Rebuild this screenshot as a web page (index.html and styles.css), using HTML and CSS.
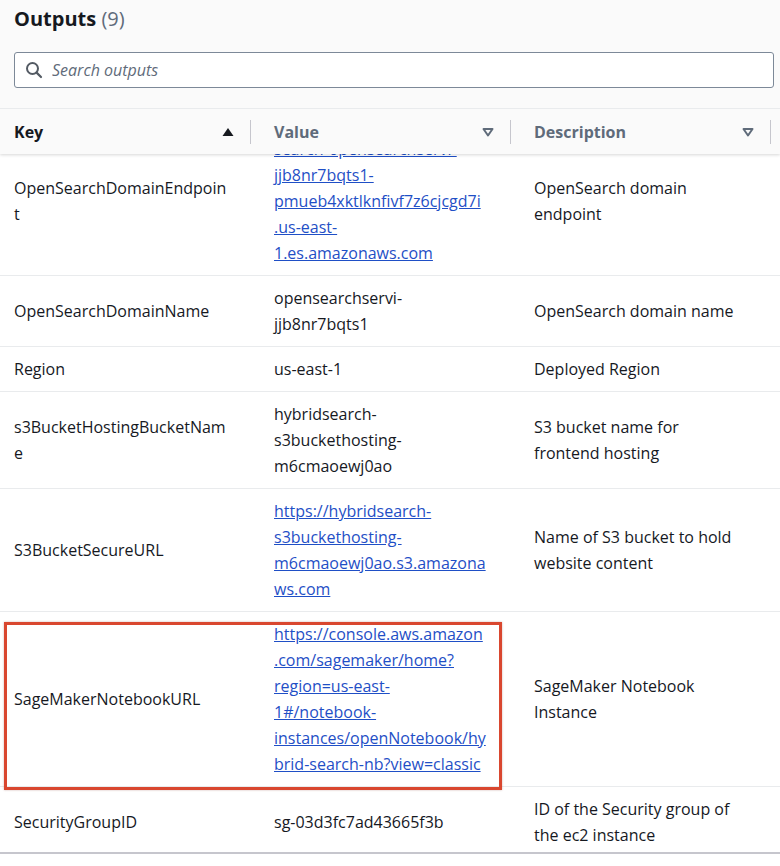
FILE: index.html
```html
<!DOCTYPE html>
<html lang="en">
<head>
<meta charset="utf-8">
<title>Outputs</title>
<link rel="stylesheet" href="styles.css">
</head>
<body>
<div class="panel">
  <div class="panel-head">
    <h2 class="title">Outputs <span class="count">(9)</span></h2>
    <label class="search">
      <svg class="search-icon" width="18" height="18" viewBox="0 0 18 18" aria-hidden="true">
        <circle cx="7.5" cy="7.5" r="5.5" fill="none" stroke="currentColor" stroke-width="2"/>
        <path d="M11.6 11.6 L16 16" stroke="currentColor" stroke-width="2.2" stroke-linecap="round"/>
      </svg>
      <input class="search-input" type="text" placeholder="Search outputs">
    </label>
  </div>

  <div class="table">
    <div class="thead">
      <div class="th sorted">
        <span class="th-label">Key</span>
        <svg class="sort" width="12" height="12" viewBox="0 0 12 12"><path d="M6 2 L11.5 10 L0.5 10 Z" fill="currentColor"/></svg>
        <span class="divider"></span>
      </div>
      <div class="th">
        <span class="th-label">Value</span>
        <svg class="sort" width="12" height="12" viewBox="0 0 12 12"><path d="M1.5 3 L10.5 3 L6 9.5 Z" fill="none" stroke="currentColor" stroke-width="2" stroke-linejoin="round"/></svg>
        <span class="divider"></span>
      </div>
      <div class="th">
        <span class="th-label">Description</span>
        <svg class="sort" width="12" height="12" viewBox="0 0 12 12"><path d="M1.5 3 L10.5 3 L6 9.5 Z" fill="none" stroke="currentColor" stroke-width="2" stroke-linejoin="round"/></svg>
        <span class="divider"></span>
      </div>
    </div>

    <div class="tbody">
      <div class="tr">
        <div class="td">OpenSearchDomainEndpoint</div>
        <div class="td val"><a href="#">search-opensearchservi-jjb8nr7bqts1-pmueb4xktlknfivf7z6cjcgd7i<br>.us-east-1.es.amazonaws.com</a></div>
        <div class="td desc">OpenSearch domain endpoint</div>
      </div>
      <div class="tr">
        <div class="td">OpenSearchDomainName</div>
        <div class="td val">opensearchservi-jjb8nr7bqts1</div>
        <div class="td desc">OpenSearch domain name</div>
      </div>
      <div class="tr">
        <div class="td">Region</div>
        <div class="td val">us-east-1</div>
        <div class="td desc">Deployed Region</div>
      </div>
      <div class="tr">
        <div class="td">s3BucketHostingBucketName</div>
        <div class="td val">hybridsearch-s3buckethosting-m6cmaoewj0ao</div>
        <div class="td desc">S3 bucket name for frontend hosting</div>
      </div>
      <div class="tr">
        <div class="td">S3BucketSecureURL</div>
        <div class="td val"><a href="#">https://hybridsearch-s3buckethosting-m6cmaoewj0ao.s3.amazonaws.com</a></div>
        <div class="td desc">Name of S3 bucket to hold website content</div>
      </div>
      <div class="tr highlighted">
        <div class="td">SageMakerNotebookURL</div>
        <div class="td val"><a href="#">https://console.aws.amazon<br>.com/sagemaker/home?region=us-east-1#/notebook-instances/openNotebook/hybrid-search-nb?view=classic</a></div>
        <div class="td desc">SageMaker Notebook Instance</div>
        <span class="callout"></span>
      </div>
      <div class="tr">
        <div class="td">SecurityGroupID</div>
        <div class="td val">sg-03d3fc7ad43665f3b</div>
        <div class="td desc">ID of the Security group of the ec2 instance</div>
      </div>
    </div>
  </div>
</div>
</body>
</html>
```

FILE: styles.css
```css
* { box-sizing: border-box; }

html, body {
  margin: 0;
  padding: 0;
  background: #ffffff;
}

body {
  font-family: "Open Sans", "Noto Sans", "Liberation Sans", sans-serif;
  font-size: 16px;
  line-height: 26px;
  color: #16191f;
}

.panel {
  width: 780px;
}

.panel-head {
  background: #fafafa;
  padding: 6px 6px 20px 14px;
  border-bottom: 1px solid #e9ebed;
}

.title {
  margin: 0;
  font-size: 20px;
  line-height: 26px;
  font-weight: 700;
  color: #16191f;
}

.count {
  font-weight: 400;
  color: #5f6b7a;
}

.search {
  margin-top: 20px;
  height: 36px;
  display: flex;
  align-items: center;
  background: #ffffff;
  border: 1px solid #7d8998;
  border-radius: 3px;
  padding-left: 10px;
}

.search-icon {
  color: #545b64;
  flex: none;
}

.search-input {
  flex: 1;
  border: none;
  outline: none;
  background: transparent;
  font: italic 16px/26px "Open Sans", "Noto Sans", sans-serif;
  color: #16191f;
  padding: 0 0 0 9px;
}

.search-input::placeholder {
  color: #5f6b7a;
  font-style: italic;
}

.table {
  height: 745px;
  overflow: hidden;
  border-bottom: 2px solid #c6c6cd;
}

.thead {
  position: relative;
  z-index: 2;
  display: grid;
  grid-template-columns: 260px 260px 260px;
  height: 45px;
  background: #fafafa;
  box-shadow: 0 1px 3px rgba(0, 0, 0, 0.16);
}

.th {
  display: flex;
  align-items: center;
  padding: 0 9px 0 14px;
  font-weight: 700;
  color: #5f6b7a;
}

.th.sorted {
  color: #16191f;
}

.th-label {
  flex: 1;
}

.sort {
  flex: none;
}

.divider {
  width: 1px;
  height: 24px;
  margin-left: 16px;
  background: #c6c6cd;
}

.tbody {
  margin-top: -27px;
}

.tr {
  position: relative;
  display: grid;
  grid-template-columns: 260px 260px 260px;
  border-bottom: 1px solid #e9ebed;
}

.td {
  display: flex;
  align-items: center;
  padding: 9px 30px 9px 14px;
  overflow-wrap: anywhere;
}

.td.val {
  padding-right: 32px;
}

.td.desc {
  padding-right: 44px;
}

.td a {
  color: #1f4fc6;
  text-decoration: underline;
}

.callout {
  position: absolute;
  top: 10px;
  left: 4px;
  width: 498px;
  height: 168px;
  border: 3px solid #d9472f;
  box-shadow: 0 0 2px rgba(120, 40, 30, 0.35);
  pointer-events: none;
}
```
